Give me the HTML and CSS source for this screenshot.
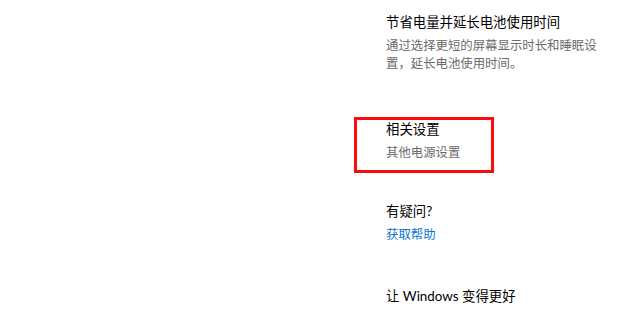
FILE: index.html
```html
<!DOCTYPE html>
<html lang="zh-CN">
<head>
<meta charset="utf-8">
<title>电源和睡眠</title>
<link rel="stylesheet" href="styles.css">
</head>
<body>
<main class="column">
  <section class="group">
    <h2 class="heading">节省电量并延长电池使用时间</h2>
    <p class="desc">通过选择更短的屏幕显示时长和睡眠设置，延长电池使用时间。</p>
  </section>
  <section class="group highlight">
    <h2 class="heading">相关设置</h2>
    <p class="related">其他电源设置</p>
  </section>
  <section class="group help">
    <h2 class="heading">有疑问?</h2>
    <a class="link" href="#">获取帮助</a>
  </section>
  <section class="group feedback">
    <h2 class="heading">让 Windows 变得更好</h2>
  </section>
</main>
</body>
</html>
```

FILE: styles.css
```css
html, body {
  margin: 0;
  padding: 0;
  background: #ffffff;
}

body {
  font-family: "Lato", "Noto Sans CJK SC", "Noto Sans", sans-serif;
  color: #000000;
  width: 620px;
  height: 309px;
  overflow: hidden;
}

.column {
  display: flex;
  flex-direction: column;
  padding: 13px 0 0 386px;
}

.group {
  display: flex;
  flex-direction: column;
  align-items: flex-start;
}

.heading {
  margin: 0;
  font-size: 13.4px;
  font-weight: 400;
  line-height: 18px;
  color: #000000;
  white-space: nowrap;
}

.desc {
  margin: 6px 0 0 0;
  width: 215px;
  font-size: 12.4px;
  line-height: 18px;
  color: #6b6b6b;
}

.highlight {
  box-sizing: border-box;
  width: 140px;
  margin: 44px 0 0 -32px;
  padding: 0 0 8px 29px;
  border: 3px solid #ff0a0a;
}

.related {
  margin: 6px 0 0 0;
  font-size: 12.4px;
  line-height: 18px;
  color: #6b6b6b;
  white-space: nowrap;
}

.help {
  margin-top: 29px;
}

.link {
  margin-top: 6px;
  font-size: 12.4px;
  line-height: 18px;
  color: #0a74d0;
  text-decoration: none;
}

.feedback {
  margin-top: 43px;
}
```
